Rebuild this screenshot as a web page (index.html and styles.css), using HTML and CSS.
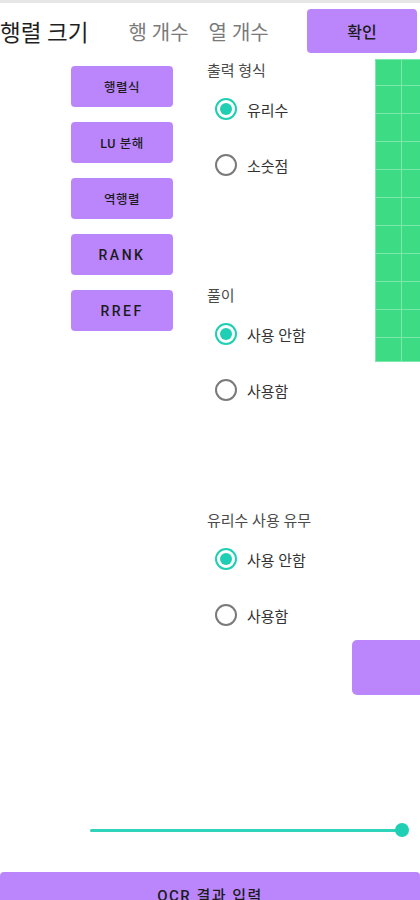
FILE: index.html
```html
<!DOCTYPE html>
<html lang="ko">
<head>
  <meta charset="UTF-8">
  <meta name="viewport" content="width=device-width, initial-scale=1.0">
  <title>행렬 계산기</title>
  <link rel="stylesheet" href="styles.css">
</head>
<body>
  <div class="page">
    <div class="status-line"></div>

    <header class="top-bar">
      <h1 class="title">행렬 크기</h1>
      <span class="size-input">행 개수</span>
      <span class="size-input">열 개수</span>
      <button class="btn confirm-btn">확인</button>
    </header>

    <section class="main-row">
      <div class="side-menu">
        <button class="btn side-btn">행렬식</button>
        <button class="btn side-btn">LU 분해</button>
        <button class="btn side-btn">역행렬</button>
        <button class="btn side-btn en">RANK</button>
        <button class="btn side-btn en">RREF</button>
      </div>

      <div class="options">
        <div class="option-group">
          <p class="group-label">출력 형식</p>
          <label class="radio-row"><span class="radio checked"></span>유리수</label>
          <label class="radio-row"><span class="radio"></span>소숫점</label>
        </div>
        <div class="option-group">
          <p class="group-label">풀이</p>
          <label class="radio-row"><span class="radio checked"></span>사용 안함</label>
          <label class="radio-row"><span class="radio"></span>사용함</label>
        </div>
        <div class="option-group">
          <p class="group-label">유리수 사용 유무</p>
          <label class="radio-row"><span class="radio checked"></span>사용 안함</label>
          <label class="radio-row"><span class="radio"></span>사용함</label>
        </div>
      </div>

      <div class="matrix" id="matrix"></div>
    </section>

    <div class="extra-row">
      <div class="extra-btn"></div>
    </div>

    <div class="slider">
      <div class="slider-track"></div>
      <div class="slider-thumb"></div>
    </div>

    <button class="btn ocr-btn">OCR 결과 입력</button>
  </div>

<script>
  // fill the matrix input cells
  const matrix = document.getElementById('matrix');
  for (let i = 0; i < 22; i++) {
    matrix.insertAdjacentHTML('beforeend', '<div class="cell"></div>');
  }
</script>
</body>
</html>
```

FILE: styles.css
```css
* {
  margin: 0;
  padding: 0;
  box-sizing: border-box;
  font-family: Roboto, 'Noto Sans CJK KR', sans-serif;
}

body {
  background: #ffffff;
  overflow: hidden;
}

.page {
  width: 420px;
  height: 900px;
  overflow: hidden;
}

.status-line {
  height: 3px;
  background: #e6e6e6;
}

.btn {
  border: none;
  background: #bb86fc;
  color: #1c1c1c;
  border-radius: 4px;
  font-weight: 500;
  cursor: pointer;
}

/* header */
.top-bar {
  display: flex;
  align-items: center;
  height: 56px;
}

.title {
  font-size: 22.5px;
  font-weight: 400;
  color: #1f1f1f;
  margin-right: 40px;
}

.size-input {
  font-size: 20px;
  color: #7a7a7a;
  margin-right: 20px;
}

.confirm-btn {
  margin-left: auto;
  margin-right: 3px;
  width: 110px;
  height: 44px;
  font-size: 16px;
}

/* main area */
.main-row {
  display: flex;
}

.side-menu {
  display: flex;
  flex-direction: column;
  gap: 15px;
  padding: 7px 0 0 71px;
  width: 173px;
  flex-shrink: 0;
}

.side-btn {
  width: 102px;
  height: 41px;
  font-size: 12.5px;
  letter-spacing: 0.5px;
}

.side-btn.en {
  font-size: 14px;
  letter-spacing: 2.5px;
}

.options {
  width: 168px;
  margin-left: 34px;
  padding-top: 2px;
  flex-shrink: 0;
}

.option-group {
  margin-bottom: 93px;
}

.option-group:last-child {
  margin-bottom: 0;
}

.group-label {
  height: 20px;
  line-height: 20px;
  font-size: 15px;
  color: #4a4a4a;
}

.radio-row {
  display: flex;
  align-items: center;
  height: 56px;
  font-size: 15px;
  color: #333;
}

.radio {
  width: 22px;
  height: 22px;
  border: 2px solid #7a7a7a;
  border-radius: 50%;
  margin: 0 10px 0 8px;
  display: flex;
  align-items: center;
  justify-content: center;
}

.radio.checked {
  border-color: #1fcfb4;
}

.radio.checked::after {
  content: '';
  width: 12px;
  height: 12px;
  border-radius: 50%;
  background: #1fcfb4;
}

.matrix {
  display: grid;
  grid-template-columns: 25px 26px;
  grid-template-rows: 25px repeat(9, 1fr) 23px;
  gap: 1px;
  padding: 1px;
  width: 54px;
  height: 303px;
  flex-shrink: 0;
  background: #7ce8ab;
}

.cell {
  background: #3ddc84;
}

/* lower area */
.extra-row {
  display: flex;
  justify-content: flex-end;
  margin-top: -3px;
}

.extra-btn {
  width: 68px;
  height: 55px;
  background: #bb86fc;
  border-radius: 5px 0 0 5px;
}

.slider {
  display: flex;
  align-items: center;
  height: 20px;
  margin: 125px 0 0 90px;
  width: 319px;
}

.slider-track {
  flex: 1;
  height: 3px;
  background: #2fd3b9;
  border-radius: 2px;
}

.slider-thumb {
  width: 14px;
  height: 14px;
  border-radius: 50%;
  background: #1fcfb4;
  margin-left: -7px;
}

.ocr-btn {
  display: block;
  width: 420px;
  height: 44px;
  margin-top: 32px;
  border-radius: 4px 4px 0 0;
  font-size: 15px;
  letter-spacing: 1.5px;
}
```
